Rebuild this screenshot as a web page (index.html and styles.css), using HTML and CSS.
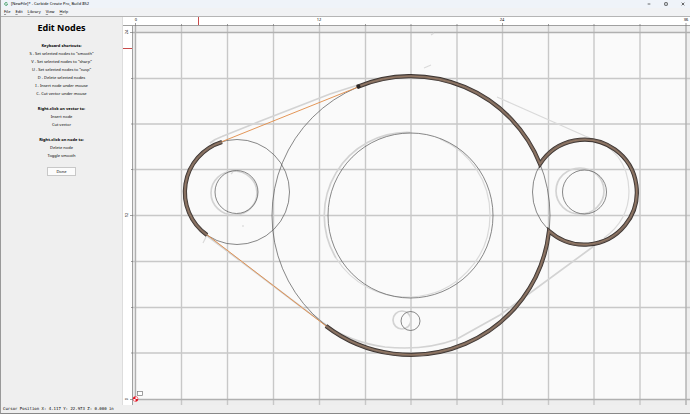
FILE: index.html
```html
<!DOCTYPE html>
<html lang="en">
<head>
    <meta charset="UTF-8">
    <meta name="viewport" content="width=device-width, initial-scale=1.0">
    <title>Carbide Create Pro</title>
    <link rel="stylesheet" href="styles.css">
</head>
<body>
    <header class="titlebar">
        <svg class="app-icon" viewBox="0 0 12 12" aria-hidden="true">
            <path d="M10 3A4.500 4.500 0 1 0 10.500 8L10.500 6.500H6.500" fill="none" stroke="#32965a" stroke-width="2.500"/>
        </svg>
        <span class="title">[NewFile]* - Carbide Create Pro, Build 852</span>
        <div class="window-buttons">
            <button type="button" aria-label="Minimize"><svg viewBox="0 0 12 12"><path d="M2 6H10"/></svg></button>
            <button type="button" aria-label="Maximize"><svg viewBox="0 0 12 12"><rect x="2" y="2" width="8" height="8" rx="1"/></svg></button>
            <button type="button" aria-label="Close"><svg viewBox="0 0 12 12"><path d="M2 2L10 10M10 2L2 10"/></svg></button>
        </div>
    </header>
    <nav class="menubar">
        <button type="button"><u>F</u>ile</button>
        <button type="button"><u>E</u>dit</button>
        <button type="button"><u>L</u>ibrary</button>
        <button type="button"><u>V</u>iew</button>
        <button type="button"><u>H</u>elp</button>
    </nav>

    <main class="workspace">
        <aside class="sidebar">
            <h1>Edit Nodes</h1>
            <section>
                <h2>Keyboard shortcuts:</h2>
                <p>S - Set selected nodes to "smooth"</p>
                <p>V - Set selected nodes to "sharp"</p>
                <p>U - Set selected nodes to "cusp"</p>
                <p>D - Delete selected nodes</p>
                <p>I - Insert node under mouse</p>
                <p>C- Cut vector under mouse</p>
            </section>
            <section>
                <h2>Right-click on vector to:</h2>
                <p>Insert node</p>
                <p>Cut vector</p>
            </section>
            <section>
                <h2>Right-click on node to:</h2>
                <p>Delete node</p>
                <p>Toggle smooth</p>
            </section>
            <button class="done-button" type="button">Done</button>
        </aside>

        <svg class="canvas" viewBox="123 17 567 388" preserveAspectRatio="xMinYMin slice" role="img" aria-label="Drawing canvas">
            <rect class="ruler" x="123" y="17" width="567" height="388"/>
            <rect class="outside" x="132" y="25" width="558" height="380"/>
            <rect class="stock" x="135" y="32" width="551" height="367"/>

            <!-- grid -->
            <path class="grid" d="M181.500 25V405M227.500 25V405M273.500 25V405M319.500 25V405M365.500 25V405M411 25V405M457 25V405M502.500 25V405M548.500 25V405M594 25V405M640 25V405"/>
            <path class="grid" d="M132 78.500H690M132 124H690M132 169.500H690M132 215.500H690M132 261.500H690M132 307.500H690M132 353H690"/>
            <path class="edge" d="M132 32.500H690M132 399.500H690M135.500 25V399M686 25V405"/>

            <!-- rulers -->
            <path class="ruler-line" d="M123 25.500H690M132.500 25V405"/>
            <path class="tick" d="M135.500 23V26M181.500 24V26M227.500 24V26M273.500 24V26M319.500 23V26M365.500 24V26M411 24V26M457 24V26M502.500 23V26M548.500 24V26M594 24V26M640 24V26M686 23V26"/>
            <path class="tick" d="M130 32.500H133M131 78.500H133M131 124H133M131 169.500H133M130 215.500H133M131 261.500H133M131 307.500H133M131 353H133M130 399.500H133"/>
            <path class="cursor-mark" d="M198.500 17V25M123 48.500H132"/>
            <g class="ruler-text">
                <text x="136" y="21">0</text>
                <text x="319" y="21">12</text>
                <text x="502" y="21">24</text>
                <text x="686" y="21">36</text>
                <text transform="translate(128 32) rotate(-90)">24</text>
                <text transform="translate(128 215) rotate(-90)">12</text>
                <text transform="translate(128 399) rotate(-90)">0</text>
            </g>

            <!-- pencil drawing under the vectors -->
            <g class="pencil">
                <path d="M210 143Q215 139 222 136.500L258 122L330 94L358 85"/>
                <path d="M206 235L300 306L326 325Q350 342 385 347Q425 351 457 339L500 315L594 246"/>
                <path class="faint" d="M497 97L585 136Q628 149 629 191Q629 220 604 238"/>
                <path d="M411 132.500A83 83 0 0 0 336 258"/>
                <path class="faint" d="M336 258A83 83 0 0 0 411 297A82 82 0 0 0 490 215A82 82 0 0 0 440 139"/>
                <ellipse cx="234" cy="193" rx="23" ry="22"/>
                <ellipse cx="580" cy="191" rx="24" ry="23"/>
                <ellipse cx="402" cy="320" rx="9" ry="9"/>
                <path class="faint" d="M206 237L203 243M424 68L431 65M431 35L434 33M243 225V227M231 174L233 172"/>
            </g>

            <!-- vectors -->
            <g class="vector">
                <circle cx="411" cy="215.500" r="139"/>
                <circle cx="410.500" cy="215.500" r="82.500"/>
                <circle cx="237" cy="192" r="52.500"/>
                <circle cx="236.500" cy="192" r="21.500"/>
                <circle cx="585" cy="192" r="52.500"/>
                <circle cx="584.500" cy="192" r="22"/>
                <circle cx="410.500" cy="321" r="9.500"/>
            </g>
            <path class="tangent" d="M221 142L358 87M206 234L326 326"/>
            <g class="selected">
                <path id="arc-left" d="M222 142A52.500 52.500 0 0 0 207 235"/>
                <path id="arc-body" d="M357 87A139 139 0 0 1 540 164A52.500 52.500 0 1 1 549 231A139 139 0 0 1 326 326"/>
            </g>
            <g class="selected-core">
                <use href="#arc-left"/>
                <use href="#arc-body"/>
            </g>
            <g class="selected-line">
                <use href="#arc-left"/>
                <use href="#arc-body"/>
            </g>
            <circle class="node" cx="358.500" cy="86.500" r="2"/>

            <!-- origin marker -->
            <circle cx="135.500" cy="399" r="2.500" fill="#fff"/>
            <path d="M135.500 399V396.500A2.500 2.500 0 0 0 133 399ZM135.500 399V401.500A2.500 2.500 0 0 0 138 399Z" fill="#e01020"/>
            <circle cx="135.500" cy="399" r="2.500" fill="none" stroke="#e01020" stroke-width="0.500"/>
            <rect x="137.500" y="391.500" width="5" height="4" fill="#fff" stroke="#777" stroke-width="0.700"/>
        </svg>
    </main>

    <footer class="statusbar">Cursor Position X: 4.117 Y: 22.973 Z: 0.000 in</footer>
</body>
</html>
```
FILE: styles.css
```css
* {
    box-sizing: border-box;
}
body {
    font-family: 'Noto Sans', 'Open Sans', sans-serif;
    font-size: 4px;
    line-height: 8px;
    margin: 0;
    height: 100vh;
    display: flex;
    flex-direction: column;
    overflow: hidden;
    background: #efefef;
    color: #000;
    border-left: 1px solid #999;
    border-bottom: 1px solid #888;
}
button {
    font: inherit;
    color: inherit;
    background: none;
    border: none;
    padding: 0;
    cursor: pointer;
}
.titlebar {
    display: flex;
    align-items: center;
    height: 8px;
    padding: 0 5px 0 3px;
    background: #eff3f9;
}
.app-icon {
    width: 4px;
    height: 4px;
    margin-right: 3px;
}
.window-buttons {
    display: flex;
    gap: 13px;
    margin-left: auto;
}
.window-buttons button {
    display: flex;
}
.window-buttons svg {
    width: 4px;
    height: 4px;
    fill: none;
    stroke: #222;
    stroke-width: 2;
}
.menubar {
    display: flex;
    gap: 5px;
    height: 9px;
    padding-left: 3px;
    background: #f1f2f4;
    border-bottom: 1px solid #b5b5b5;
}
.menubar button {
    line-height: 8px;
}
.menubar u {
    text-decoration-thickness: 1px;
    text-decoration-color: #999;
}
.workspace {
    display: flex;
    flex: 1;
    min-height: 0;
}
.sidebar {
    width: 122px;
    flex-shrink: 0;
    text-align: center;
    border-right: 1px solid #ddd;
}
h1 {
    font-size: 9px;
    line-height: 12px;
    font-weight: 700;
    margin: 5px 0 8px;
}
h2 {
    font-size: 4px;
    line-height: 8px;
    font-weight: 700;
    margin: 0;
}
p {
    margin: 0;
}
section {
    margin-bottom: 7px;
}
.done-button {
    width: 29px;
    height: 9px;
    line-height: 7px;
    background: #fcfcfc;
    border: 1px solid #c8c8c8;
}
.canvas {
    display: block;
    flex: 1;
    min-width: 0;
    height: 100%;
}
.ruler {
    fill: #fff;
}
.outside {
    fill: #eee;
}
.stock {
    fill: #fafafa;
}
.grid {
    fill: none;
    stroke: #c8c8c8;
    stroke-width: 1.4;
}
.edge {
    fill: none;
    stroke: #b0b0b0;
    stroke-width: 1.4;
}
.ruler-line {
    fill: none;
    stroke: #a0a0a0;
}
.tick {
    stroke: #777;
    stroke-width: 0.7;
}
.cursor-mark {
    stroke: #c94a4a;
}
.ruler-text {
    font-size: 4px;
    text-anchor: middle;
    fill: #000;
}
.pencil {
    fill: none;
    stroke: #d3d3d3;
    stroke-width: 1.7;
}
.pencil .faint {
    stroke: #dadada;
    stroke-width: 1.2;
}
.vector {
    fill: none;
    stroke: #555;
    stroke-width: 0.7;
}
.tangent {
    fill: none;
    stroke: #e08a45;
    stroke-width: 0.9;
}
.selected {
    fill: none;
    stroke: #3c3430;
    stroke-width: 4.2;
}
.selected-core {
    fill: none;
    stroke: #75645a;
    stroke-width: 2.6;
}
.selected-line {
    fill: none;
    stroke: #a08068;
    stroke-width: 0.8;
}
.node {
    fill: #2a2422;
}
.statusbar {
    height: 8px;
    padding-left: 2px;
    font-family: 'DejaVu Sans Mono', monospace;
    font-size: 4px;
    line-height: 8px;
}
```
